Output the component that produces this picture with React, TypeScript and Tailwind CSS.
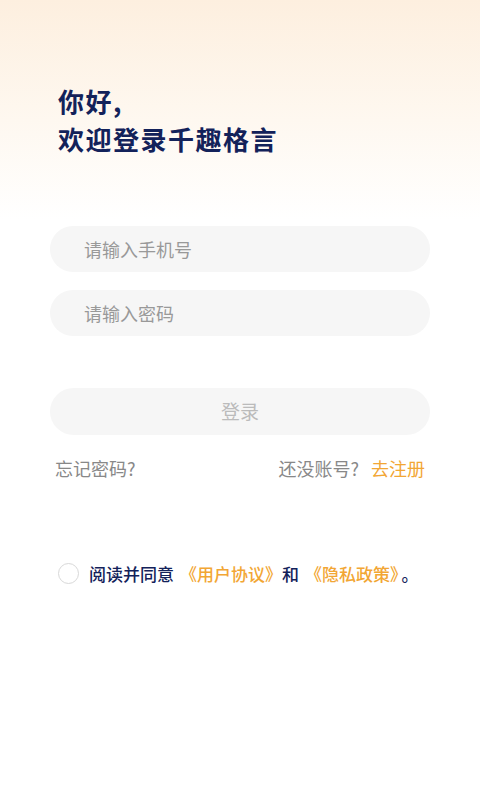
import React from "react";

const font = { fontFamily: '"Noto Sans CJK SC", "Noto Sans", sans-serif' };

function Field({ placeholder, type = "text" }: { placeholder: string; type?: string }) {
    return (
        <input
            type={type}
            placeholder={placeholder}
            className="h-[46px] w-full rounded-full bg-[#f6f6f6] px-[34px] text-[18px] text-[#333] placeholder:text-[#999] outline-none"
        />
    );
}

export default function App() {
    return (
        <div
            className="h-[800px] w-full bg-[linear-gradient(180deg,#fdefdf_0px,#fef8f0_120px,#ffffff_220px)]"
            style={font}
        >
            <div className="px-[58px] pt-[82px]">
                <h1 className="text-[26px] font-bold leading-[38px] tracking-[1.5px] text-[#13225a]">
                    <div>你好,</div>
                    <div>欢迎登录千趣格言</div>
                </h1>
            </div>

            <div className="mt-[68px] flex flex-col gap-[18px] px-[50px]">
                <Field placeholder="请输入手机号" />
                <Field placeholder="请输入密码" type="password" />
            </div>

            <div className="mt-[52px] px-[50px]">
                <button className="h-[47px] w-full rounded-full bg-[#f6f6f6] text-[19px] text-[#bbbbbb]">
                    登录
                </button>
            </div>

            <div className="mt-[20px] flex items-center justify-between px-[55px] text-[18px] leading-[26px]">
                <span className="text-[#888]">忘记密码?</span>
                <span className="text-[#888]">
                    还没账号?<span className="ml-[12px] text-[#f2a634]">去注册</span>
                </span>
            </div>

            <div className="mt-[80px] flex items-center gap-[10px] pl-[58px] text-[17px] font-medium leading-[25px]">
                <span className="h-[21px] w-[21px] shrink-0 rounded-full border border-[#d8d8d8] bg-white" />
                <span className="whitespace-nowrap text-[#13225a]">
                    阅读并同意
                    <span className="ml-[6px] text-[#f2a634]">《用户协议》</span>和
                    <span className="ml-[6px] text-[#f2a634]">《隐私政策》</span>
                    <span className="ml-[3px]">。</span>
                </span>
            </div>
        </div>
    );
}
